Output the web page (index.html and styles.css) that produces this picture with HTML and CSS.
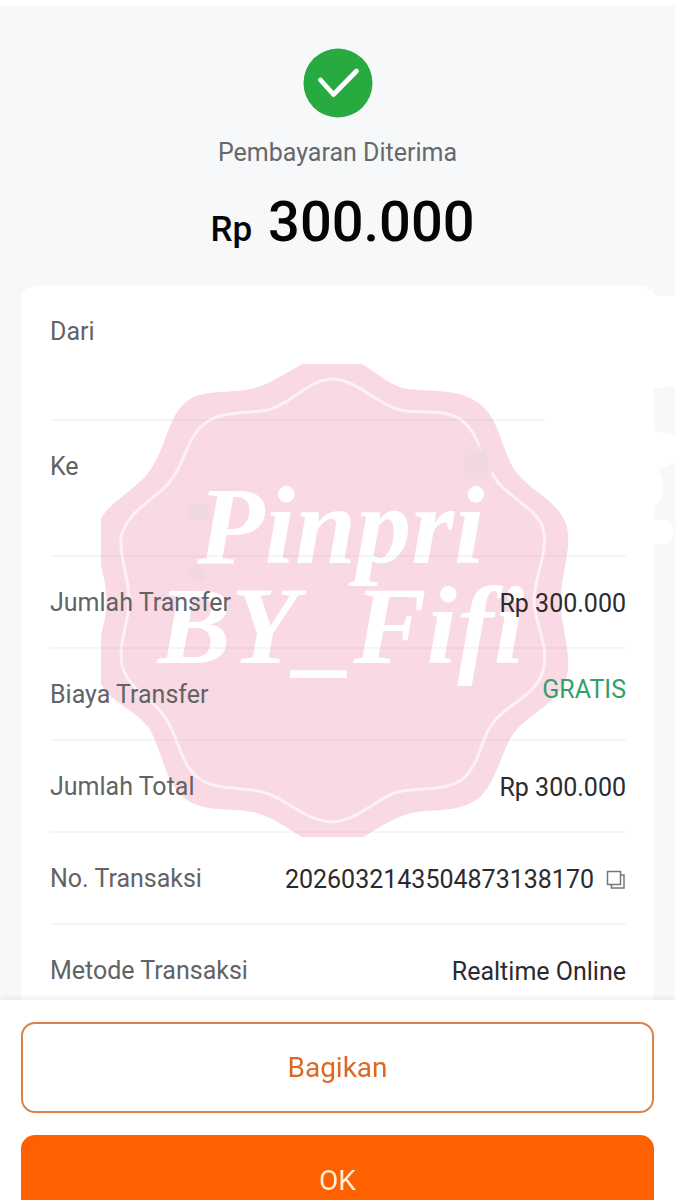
FILE: index.html
```html
<!DOCTYPE html>
<html lang="id">
<head>
<meta charset="utf-8">
<meta name="viewport" content="width=device-width, initial-scale=1">
<title>Pembayaran Diterima</title>
<link rel="stylesheet" href="styles.css">
</head>
<body>
<main class="receipt">
  <header class="status">
    <svg class="status-icon" viewBox="0 0 70 70" aria-hidden="true">
      <circle cx="35" cy="35" r="34.5" fill="#27aa40"/>
      <path d="M17.500 32 30.500 46.500 53.500 23" fill="none" stroke="#fff" stroke-width="4.8" stroke-linecap="round" stroke-linejoin="round"/>
    </svg>
    <p class="status-text">Pembayaran Diterima</p>
    <h1 class="amount"><span class="currency">Rp</span> 300.000</h1>
  </header>

  <section class="card">
    <svg class="edge" viewBox="0 0 24 260" aria-hidden="true">
      <path fill="#fff" d="M0 0Q2 10 12 10H24V100Q14 102 3 102V145Q12 146 24 150V176Q14 181 6 184Q14 190 12 200Q14 210 4 221L2 234H15Q23 235 23 246T14 258H0Z"/>
    </svg>
    <svg class="badge" viewBox="101 363 468 473" aria-hidden="true">
      <defs>
        <radialGradient id="smudge">
          <stop offset="0" stop-color="#efd8dd"/>
          <stop offset="0.6" stop-color="#f1d8df" stop-opacity="0.8"/>
          <stop offset="1" stop-color="#f8d9e3" stop-opacity="0"/>
        </radialGradient>
      </defs>
      <path fill="#f9d9e4" d="M302 363C277 377 264 388 236 390C209 392 193 391 180 407C165 427 166 449 146 475C130 492 112 500 101 517V565C104 577 107 589 106 600C107 612 104 623 101 634V683C112 702 134 708 149 727C164 753 164 782 187 799C207 812 232 806 257 812C276 818 287 827 302 836H363C380 826 396 815 416 811C443 808 464 811 482 794C500 773 502 744 518 727C537 709 560 699 567 675C572 650 560 625 561 600C560 576 572 550 567 526C558 496 526 491 511 463C500 440 498 418 480 403C459 387 432 391 407 388C390 385 377 372 362 363Z"/>
      <path fill="none" stroke="#fdf1f5" stroke-width="3" d="M481 450C477 437 471 426 460 418C441 407 420 413 400 409C376 403 358 379 332 378C307 379 292 403 268 409C246 413 219 409 203 424C185 440 184 466 168 483C151 501 127 511 121 536C119 558 130 578 129 600C129 622 118 641 122 664C128 689 151 695 165 716C182 743 180 767 203 780C223 791 246 784 269 793C289 801 307 820 332 821C356 820 374 800 394 792C417 785 442 792 463 778C483 759 479 736 497 717C514 700 537 692 543 670C550 647 535 624 534 600C534 575 549 552 543 527C535 504 504 496 492 472"/>
      <ellipse cx="476" cy="463" rx="18" ry="22" fill="url(#smudge)"/>
      <ellipse cx="199" cy="511" rx="17" ry="13" fill="url(#smudge)"/>
      <ellipse cx="198" cy="573" rx="13" ry="12" fill="url(#smudge)"/>
      <text class="badge-text" x="341" y="562">Pinpri</text>
      <text class="badge-text" x="341" y="662">BY_Fifi</text>
    </svg>

    <dl class="details">
      <div class="row row-party row-from"><dt>Dari</dt><dd></dd></div>
      <div class="row row-party"><dt>Ke</dt><dd></dd></div>
      <div class="row"><dt>Jumlah Transfer</dt><dd>Rp 300.000</dd></div>
      <div class="row"><dt>Biaya Transfer</dt><dd class="free">GRATIS</dd></div>
      <div class="row"><dt>Jumlah Total</dt><dd>Rp 300.000</dd></div>
      <div class="row">
        <dt>No. Transaksi</dt>
        <dd>2026032143504873138170
          <button class="copy" type="button" aria-label="Salin nomor transaksi">
            <svg viewBox="0 0 20 20" aria-hidden="true"><path d="M1.500 1.500H14.500V14.500H1.500ZM14.500 5H18V18H5.500V14.500" fill="none" stroke="#777" stroke-width="1.500"/></svg>
          </button>
        </dd>
      </div>
      <div class="row"><dt>Metode Transaksi</dt><dd>Realtime Online</dd></div>
    </dl>
  </section>
</main>

<footer class="actions">
  <button class="button button-outline" type="button">Bagikan</button>
  <button class="button button-primary" type="button">OK</button>
</footer>
</body>
</html>
```
FILE: styles.css
```css
* { box-sizing: border-box; }

body {
  margin: 0;
  border-top: 6px solid #fff;
  background: #f6f8fa;
  color: #2b2b2d;
  font-family: Roboto, "Noto Sans", sans-serif;
  font-size: 25px;
  line-height: 30px;
}

.receipt { padding: 42px 21px 0; }

.status {
  display: flex;
  flex-direction: column;
  align-items: center;
}

.status-icon { width: 70px; height: 70px; }

.status-text { margin: 20px 0 0; color: #67686b; }

.amount {
  display: flex;
  align-items: baseline;
  gap: 16px;
  margin: 20px 0 0;
  padding-left: 10px;
  color: #050506;
  font-size: 56px;
  font-weight: 500;
  line-height: 68px;
}

.currency { font-size: 35px; }

.card {
  position: relative;
  margin-top: 22px;
  border-radius: 14px;
  background: #fff;
}

.edge {
  position: absolute;
  top: 0;
  right: -21px;
  width: 24px;
  height: 260px;
}

.badge {
  position: absolute;
  top: 78px;
  left: 50%;
  width: 468px;
  height: 473px;
  margin-left: -237px;
}

.badge-text {
  fill: #fff;
  font-family: "Liberation Serif", serif;
  font-size: 110px;
  font-style: italic;
  font-weight: 700;
  text-anchor: middle;
}

.details {
  position: relative;
  margin: 0;
  padding: 0 28px 0 29px;
}

.row {
  display: flex;
  justify-content: space-between;
  min-height: 92px;
  padding: 31px 0 29px;
  background: linear-gradient(#80808012, #80808012) left bottom / 100% 2px no-repeat;
}

.row:last-child { background: none; }
.row-party { min-height: 136px; }
.row-from { min-height: 135px; background-size: 86% 2px; }

.row dt { color: #626366; }

.row dd {
  display: flex;
  align-items: center;
  gap: 12px;
  margin: 0;
}

.row .free {
  align-self: flex-start;
  margin-top: -5px;
  color: #32a06a;
}

.copy {
  display: flex;
  padding: 0;
  border: 0;
  background: none;
}

.copy svg { width: 20px; height: 20px; }

.actions {
  position: fixed;
  right: 0;
  bottom: -48px;
  left: 0;
  display: flex;
  flex-direction: column;
  gap: 22px;
  padding: 22px 21px;
  background: #fff;
  box-shadow: 0 -2px 6px #00000012;
}

.button {
  height: 91px;
  border: 2px solid #d98347;
  border-radius: 14px;
  font-family: inherit;
  font-size: 28px;
  line-height: 32px;
}

.button-outline { background: #fff; color: #dc6826; }

.button-primary {
  border-color: #ff6000;
  background: #ff6000;
  color: #fff0dc;
}
```
